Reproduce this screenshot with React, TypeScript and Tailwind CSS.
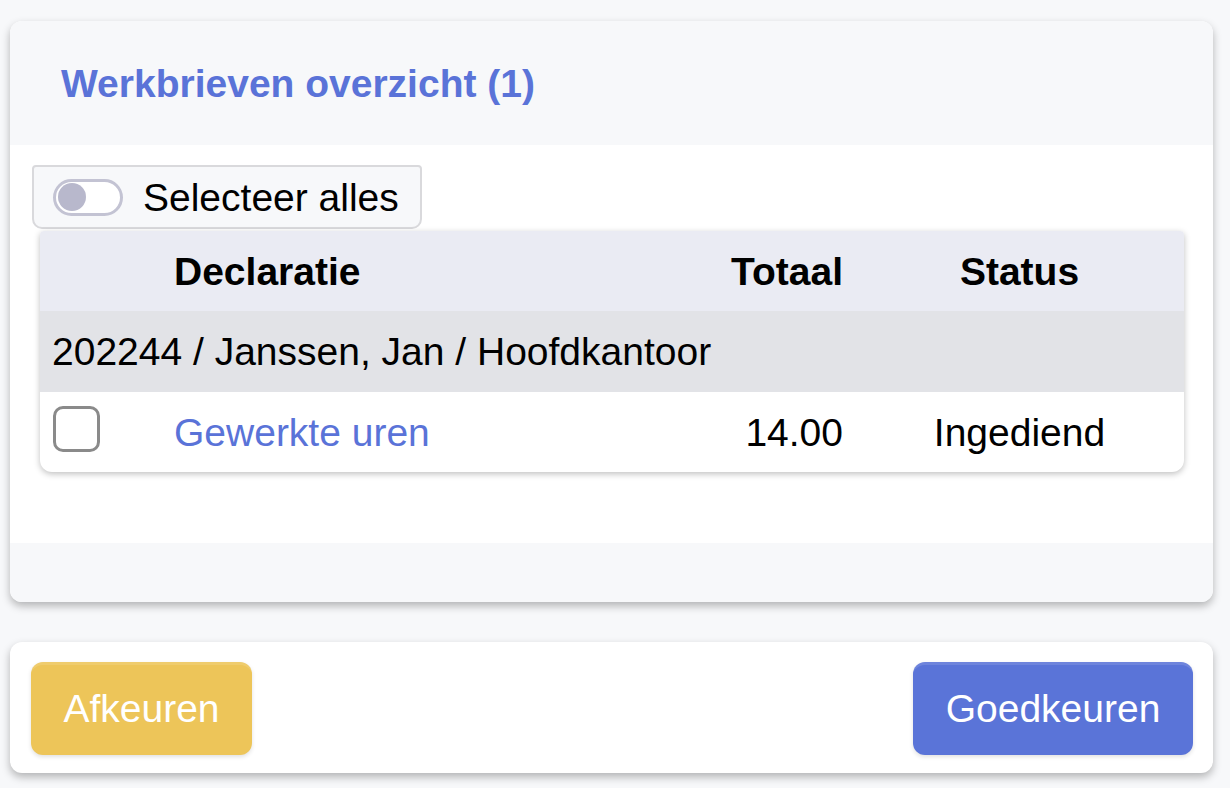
import React from "react";

export default function App() {
  return (
    <div className="min-h-screen bg-[#f7f8fa] px-[10px] pt-[21px] pb-[20px] font-['Liberation_Sans',Arial,sans-serif] text-black">
      <div className="w-[1203px] overflow-hidden rounded-[12px] bg-white shadow-[0_4px_8px_rgba(0,0,0,0.28)]">
        <div className="flex h-[124px] items-center bg-[#f7f8fa] pl-[51px]">
          <h1 className="text-[39px] font-bold leading-none text-[#5a73d8]">Werkbrieven overzicht (1)</h1>
        </div>
        <div className="h-[398px] bg-white pt-[20px]">
          <div className="ml-[22px] flex h-[64px] w-[390px] items-center gap-[20px] rounded-[10px] rounded-t-[4px] border-2 border-[#d9d9dc] bg-[#f7f8fa] pl-[19px]">
            <div className="flex h-[37px] w-[70px] items-center rounded-full border-[3px] border-[#c3c3d3] bg-white pl-[2px]">
              <div className="h-[28px] w-[28px] rounded-full bg-[#b8b8cc]" />
            </div>
            <span className="text-[39px] leading-none">Selecteer alles</span>
          </div>
          <div className="ml-[30px] mr-[29px] mt-[2px] overflow-hidden rounded-b-[12px] rounded-t-[4px] bg-white shadow-[0_2px_6px_rgba(0,0,0,0.25)]">
            <div className="grid h-[80px] grid-cols-[134px_1fr_190px_341px] items-center bg-[#eaebf3]">
              <div />
              <div className="text-[39px] font-bold leading-none">Declaratie</div>
              <div className="text-right text-[39px] font-bold leading-none">Totaal</div>
              <div className="pl-[12px] text-center text-[39px] font-bold leading-none">Status</div>
            </div>
            <div className="flex h-[81px] items-center bg-[#e2e3e7] pl-[12px] text-[39px] leading-none">
              202244 / Janssen, Jan / Hoofdkantoor
            </div>
            <div className="grid h-[80px] grid-cols-[134px_1fr_190px_341px] items-center">
              <div className="pl-[13px] pb-[7px]">
                <div className="h-[46px] w-[47px] rounded-[10px] border-[3px] border-[#8a8a8a] bg-white" />
              </div>
              <div className="text-[39px] leading-none text-[#5a73d8]">Gewerkte uren</div>
              <div className="text-right text-[39px] leading-none">14.00</div>
              <div className="pl-[12px] text-center text-[39px] leading-none">Ingediend</div>
            </div>
          </div>
        </div>
        <div className="h-[59px] bg-[#f7f8fa]" />
      </div>
      <div className="mt-[40px] flex h-[131px] w-[1203px] items-start justify-between rounded-[12px] bg-white pl-[21px] pr-[20px] pt-[20px] shadow-[0_4px_8px_rgba(0,0,0,0.28)]">
        <button className="flex h-[93px] w-[221px] items-center justify-center rounded-[12px] bg-[#edc559] text-[39px] leading-none text-white shadow-[inset_0_4px_0_-1px_rgba(255,255,255,0.12),0_2px_4px_rgba(0,0,0,0.12)]">
          Afkeuren
        </button>
        <button className="flex h-[93px] w-[280px] items-center justify-center rounded-[12px] bg-[#5a74d8] text-[39px] leading-none text-white shadow-[inset_0_4px_0_-1px_rgba(255,255,255,0.12),0_2px_4px_rgba(0,0,0,0.12)]">
          Goedkeuren
        </button>
      </div>
    </div>
  );
}
